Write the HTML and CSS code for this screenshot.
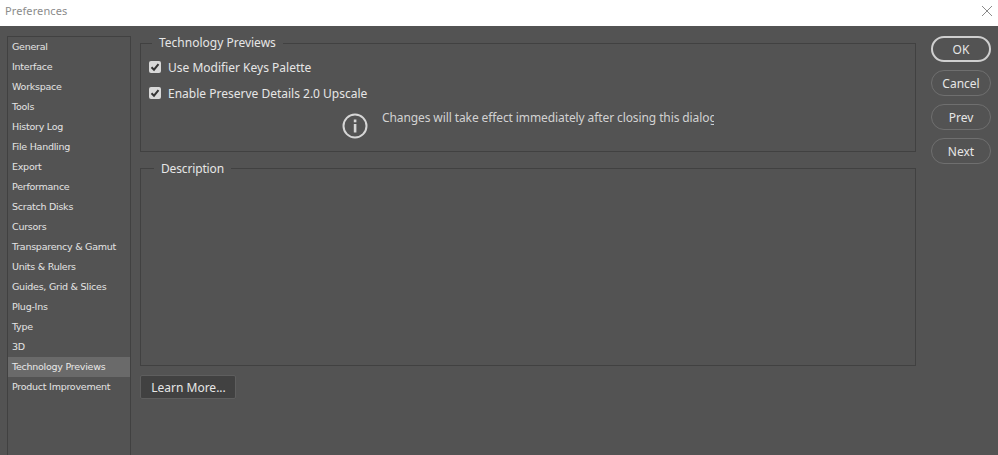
FILE: index.html
```html
<!DOCTYPE html>
<html lang="en">

<head>
    <meta charset="UTF-8">
    <title>Preferences</title>
    <link rel="stylesheet" href="styles.css">
</head>

<body>
    <div class="titlebar">
        <span class="title">Preferences</span>
        <svg class="close" width="12" height="12" viewBox="0 0 12 12">
            <path d="M1 1 L11 11 M11 1 L1 11" stroke="#8a8a8a" stroke-width="1" fill="none" />
        </svg>
    </div>

    <div class="dialog">
        <ul class="nav">
            <li>General</li>
            <li>Interface</li>
            <li>Workspace</li>
            <li>Tools</li>
            <li>History Log</li>
            <li>File Handling</li>
            <li>Export</li>
            <li>Performance</li>
            <li>Scratch Disks</li>
            <li>Cursors</li>
            <li>Transparency &amp; Gamut</li>
            <li>Units &amp; Rulers</li>
            <li>Guides, Grid &amp; Slices</li>
            <li>Plug-Ins</li>
            <li>Type</li>
            <li>3D</li>
            <li class="selected">Technology Previews</li>
            <li>Product Improvement</li>
        </ul>

        <div class="main">
            <fieldset class="group previews">
                <legend>Technology Previews</legend>
                <label class="check">
                    <span class="box">
                        <svg width="10" height="10" viewBox="0 0 10 10">
                            <path d="M1.5 5.2 L4 7.7 L8.5 2.2" stroke="#333" stroke-width="2" fill="none" />
                        </svg>
                    </span>
                    Use Modifier Keys Palette
                </label>
                <label class="check">
                    <span class="box">
                        <svg width="10" height="10" viewBox="0 0 10 10">
                            <path d="M1.5 5.2 L4 7.7 L8.5 2.2" stroke="#333" stroke-width="2" fill="none" />
                        </svg>
                    </span>
                    Enable Preserve Details 2.0 Upscale
                </label>
                <div class="notice">
                    <svg class="info" width="26" height="26" viewBox="0 0 26 26">
                        <circle cx="13" cy="13" r="11.5" stroke="#d6d6d6" stroke-width="2" fill="none" />
                        <rect x="11.8" y="6.5" width="2.6" height="2.8" fill="#d6d6d6" />
                        <rect x="11.8" y="11" width="2.6" height="8.5" fill="#d6d6d6" />
                    </svg>
                    <p class="notice-text">Changes will take effect immediately after closing this dialog</p>
                </div>
            </fieldset>

            <fieldset class="group description">
                <legend>Description</legend>
            </fieldset>

            <button class="learn">Learn More...</button>
        </div>

        <div class="actions">
            <button class="pill primary">OK</button>
            <button class="pill">Cancel</button>
            <button class="pill">Prev</button>
            <button class="pill">Next</button>
        </div>
    </div>
</body>
</html>
```

FILE: styles.css
```css
body {
    font-family: 'Noto Sans', sans-serif;
    background-color: #535353;
    color: #e6e6e6;
    margin: 0;
    padding: 0;
    height: 455px;
    overflow: hidden;
}

.titlebar {
    height: 26px;
    background: #fff;
    display: flex;
    align-items: center;
    justify-content: space-between;
    padding: 0 5px;
}

.title {
    font-size: 11px;
    letter-spacing: 0.1px;
    color: #8b8b8b;
    margin-bottom: 5px;
}

.close {
    margin-bottom: 5px;
}

.dialog {
    display: flex;
    align-items: flex-start;
    height: 429px;
}

.nav {
    list-style: none;
    margin: 10px 0 0 7px;
    padding: 0;
    width: 122px;
    height: 419px;
    flex: none;
    border: 1px solid #414141;
    border-bottom: none;
}

.nav li {
    height: 20px;
    line-height: 19px;
    padding-left: 4px;
    font-family: 'DejaVu Sans', sans-serif;
    font-size: 9.5px;
    letter-spacing: -0.25px;
    color: #e4e4e4;
}

.nav .selected {
    background: #6a6a6a;
    color: #e8e8e8;
}

.main {
    width: 776px;
    margin: 10px 0 0 9px;
    flex: none;
}

.group {
    margin: 0;
    padding: 0;
    border: 1px solid #414141;
    box-sizing: border-box;
    min-width: 0;
}

.group legend {
    padding: 0 7px;
    font-size: 12px;
    line-height: 14px;
    color: #e6e6e6;
}

.previews {
    height: 116px;
    padding: 8px 0 0 8px;
}

.previews legend {
    margin-left: 3px;
}

.description {
    height: 206px;
    margin-top: 8px;
}

.description legend {
    margin-left: 13px;
    padding-top: 2px;
    letter-spacing: -0.15px;
}

.check {
    display: flex;
    align-items: center;
    height: 18px;
    margin-bottom: 8px;
    font-size: 12px;
    color: #e6e6e6;
}

.box {
    width: 12px;
    height: 12px;
    background: #d8d8d8;
    border-radius: 2px;
    margin-right: 7px;
    display: flex;
    align-items: center;
    justify-content: center;
}

.notice {
    display: flex;
    align-items: flex-start;
    margin: -1px 0 0 193px;
}

.info {
    margin-top: 4px;
    flex: none;
}

.notice-text {
    width: 332px;
    margin: 0 0 0 14px;
    font-size: 12px;
    line-height: 18px;
    letter-spacing: -0.1px;
    color: #d2d2d2;
    white-space: nowrap;
    overflow: hidden;
}

.learn {
    display: block;
    width: 96px;
    height: 24px;
    margin-top: 9px;
    padding: 0 0 0 1px;
    border: 1px solid #5e5e5e;
    border-radius: 2px;
    background: #414141;
    color: #e6e6e6;
    font-family: inherit;
    font-size: 12px;
}

.actions {
    display: flex;
    flex-direction: column;
    gap: 8px;
    margin: 10px 0 0 15px;
}

.pill {
    width: 60px;
    height: 26px;
    padding: 0;
    border: 1px solid #6f6f6f;
    border-radius: 13px;
    background: transparent;
    color: #e6e6e6;
    font-family: inherit;
    font-size: 12px;
}

.primary {
    border: 2px solid #cfcfcf;
}
```
